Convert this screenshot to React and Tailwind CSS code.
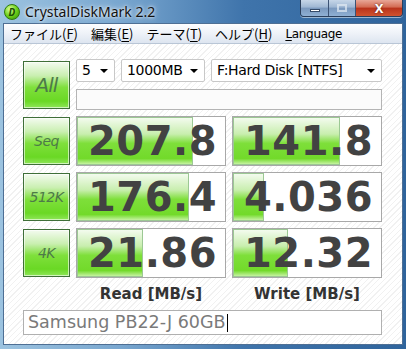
import React from "react";

const rows = [
  { label: "Seq", read: "207.8", write: "141.8", readBar: 116, writeBar: 107 },
  { label: "512K", read: "176.4", write: "4.036", readBar: 112, writeBar: 31 },
  { label: "4K", read: "21.86", write: "12.32", readBar: 66, writeBar: 55 },
];

function GreenButton({ children, className = "" }) {
  return (
    <div
      className={`w-[47px] h-[48px] shrink-0 border border-[#3f6f38] bg-[linear-gradient(180deg,#f4fbf0_0%,#c9efb0_30%,#7fe03c_55%,#6ad824_85%,#8fe65a_100%)] shadow-[inset_0_0_0_1px_rgba(255,255,255,0.6)] flex items-center justify-center ${className}`}
    >
      {children}
    </div>
  );
}

function ResultBox({ value, bar }) {
  return (
    <div className="relative w-[150px] h-[50px] border border-[#a8a8a8] bg-white">
      <div
        className="absolute left-0 top-0 bottom-0 border border-[#9cc894] bg-[linear-gradient(180deg,#f3fbee_0%,#c8eeae_35%,#7edf3a_55%,#72da2a_88%,#c5f2a0_100%)]"
        style={{ width: bar }}
      />
      <div className="relative h-full flex items-center justify-end pr-[8px] font-['DejaVu_Sans',sans-serif] font-bold text-[40px] leading-none text-[#424242] tracking-[0.5px]">
        {value}
      </div>
    </div>
  );
}

function Select({ text, width }) {
  return (
    <div
      className="h-[23px] shrink-0 border border-[#c8c8c8] rounded-[2px] bg-white flex items-center justify-between pl-[5px] pr-[6px] text-[14px] text-black font-['DejaVu_Sans',sans-serif]"
      style={{ width }}
    >
      <span className="tracking-[-0.3px]">{text}</span>
      <svg width="8" height="4" viewBox="0 0 8 4">
        <path d="M0 0H8L4 4Z" fill="#000" />
      </svg>
    </div>
  );
}

function MenuItem({ pre, key1, post }) {
  return (
    <span>
      {pre}
      <span className="underline underline-offset-2">{key1}</span>
      {post}
    </span>
  );
}

export default function App() {
  return (
    <div className="w-[406px] h-[349px] overflow-hidden flex flex-col bg-[linear-gradient(90deg,#9cc3e0_0%,#78a6cf_30%,#3f74ab_60%,#2f649c_100%)] font-['Noto_Sans',sans-serif]">
      {/* title bar */}
      <div className="h-[23px] shrink-0 flex items-start relative">
        <div className="ml-[4px] mt-[4px] w-[16px] h-[16px] rounded-full bg-[radial-gradient(circle_at_35%_30%,#d8ff9a_0%,#6fd21a_50%,#2f8a0a_100%)] border border-[#2f7a0c] flex items-center justify-center text-[10px] font-bold italic text-[#1d4d05] leading-none">
          D
        </div>
        <div className="ml-[5px] mt-[2px] text-[14px] text-[#111] leading-[20px] [text-shadow:0_0_6px_rgba(255,255,255,0.9),0_0_3px_rgba(255,255,255,0.9)]">
          CrystalDiskMark 2.2
        </div>
        <div className="absolute right-[3px] top-0 flex h-[17px] rounded-b-[4px] border border-t-0 border-[#2a3f5c] overflow-hidden shadow-[0_1px_0_rgba(255,255,255,0.5)]">
          <div className="w-[28px] h-full border-r border-[#3b5274] bg-[linear-gradient(180deg,#c6d6e8_0%,#9fb7d3_45%,#7a98bd_50%,#8fb0d4_100%)] flex items-center justify-center">
            <div className="w-[10px] h-[3px] bg-white border border-[#344a68] mt-[4px]" />
          </div>
          <div className="w-[27px] h-full border-r border-[#3b5274] bg-[linear-gradient(180deg,#c6d6e8_0%,#9fb7d3_45%,#7a98bd_50%,#8fb0d4_100%)] flex items-center justify-center">
            <div className="w-[10px] h-[8px] border-2 border-[#e3ebf4] opacity-70" />
          </div>
          <div className="w-[46px] h-full bg-[linear-gradient(180deg,#e8a797_0%,#d36a52_45%,#b8321b_50%,#d0532f_100%)] flex items-center justify-center text-white font-bold text-[13px] leading-none [text-shadow:0_0_2px_#4a1a10]">
            X
          </div>
        </div>
      </div>

      {/* body frame */}
      <div className="flex-1 mx-[3px] mb-[4px] border border-[#4e6f94] flex flex-col bg-white">
        {/* menu */}
        <div className="h-[20px] shrink-0 flex items-center gap-[13px] pl-[6px] text-[13px] text-black bg-[linear-gradient(180deg,#fdfeff_0%,#eef2f8_50%,#dde5f0_100%)] border-b border-[#b9c6d6] font-['Noto_Sans_CJK_JP','Noto_Sans',sans-serif] leading-none">
          <MenuItem pre="ファイル(" key1="F" post=")" />
          <MenuItem pre="編集(" key1="E" post=")" />
          <MenuItem pre="テーマ(" key1="T" post=")" />
          <MenuItem pre="ヘルプ(" key1="H" post=")" />
          <span className="font-['DejaVu_Sans',sans-serif] text-[12px] tracking-[-0.3px]">
            <span className="underline underline-offset-2">L</span>anguage
          </span>
        </div>

        {/* client */}
        <div className="flex-1 bg-[repeating-linear-gradient(135deg,#ffffff_0px,#ffffff_3px,#f1f1f1_3px,#f1f1f1_4px)] pl-[19px] pt-[15px]">
          <div className="flex gap-[6px]">
            <GreenButton className="mt-[2px]">
              <span className="font-['DejaVu_Sans',sans-serif] italic text-[20px] text-[#4d7a48] tracking-[-1px]">All</span>
            </GreenButton>
            <div className="flex flex-col">
              <div className="flex gap-[6px]">
                <Select text="5" width={39} />
                <Select text="1000MB" width={84} />
                <Select text="F:Hard Disk [NTFS]" width={171} />
              </div>
              <div className="mt-[7px] w-[306px] h-[21px] border border-[#b4b4b4] bg-[#fbfbfb]" />
            </div>
          </div>

          <div className="flex flex-col gap-[6px] mt-[6px]">
            {rows.map((r) => (
              <div key={r.label} className="flex gap-[6px]">
                <GreenButton className="mt-[1px]">
                  <span className="font-['DejaVu_Sans',sans-serif] italic text-[14px] text-[#4d7a48] tracking-[-0.5px]">
                    {r.label}
                  </span>
                </GreenButton>
                <ResultBox value={r.read} bar={r.readBar} />
                <ResultBox value={r.write} bar={r.writeBar} />
              </div>
            ))}
          </div>

          <div className="flex mt-[6px] h-[20px] items-center font-['DejaVu_Sans',sans-serif] font-bold text-[15px] text-[#333]">
            <div className="w-[53px]" />
            <div className="w-[150px] text-center">Read [MB/s]</div>
            <div className="w-[6px]" />
            <div className="w-[150px] text-center">Write [MB/s]</div>
          </div>

          <div className="mt-[6px] w-[359px] h-[25px] border border-[#b0b0b0] bg-white flex items-center pl-[4px] font-['DejaVu_Sans',sans-serif] text-[17.5px] text-[#7a7a7a]">
            Samsung PB22-J 60GB
            <span className="ml-[1px] w-[1px] h-[18px] bg-black" />
          </div>
        </div>
      </div>
    </div>
  );
}
